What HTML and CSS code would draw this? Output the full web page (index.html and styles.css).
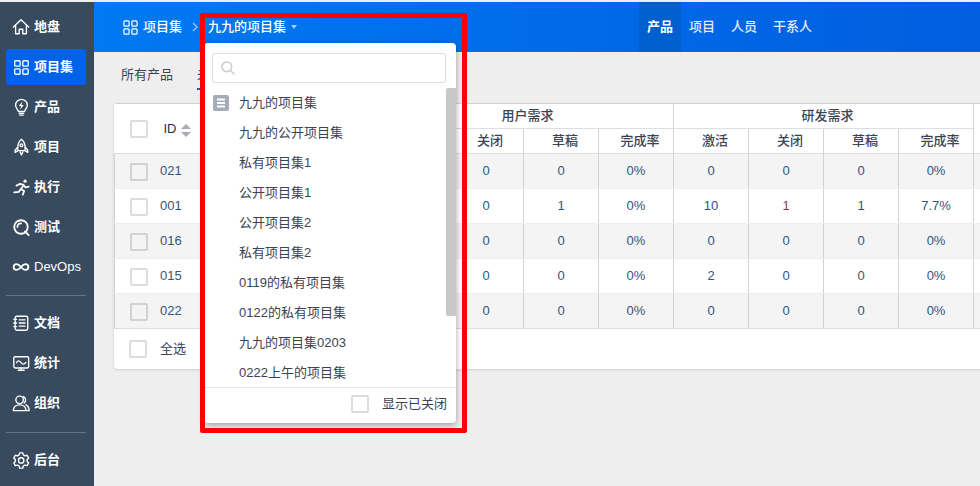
FILE: index.html
```html
<!DOCTYPE html>
<html lang="zh-CN">
<head>
<meta charset="utf-8">
<title>项目集</title>
<link rel="stylesheet" href="styles.css">
</head>
<body>
<div class="app">
  <aside class="sidebar">
    <nav class="nav-group">
      <a class="nav-item"><svg class="nav-icon" viewBox="0 0 20 20"><path d="M1.500 10 10 2l8.500 8M4 8v9.500h4V12.500h4v5h4V8"/></svg><span>地盘</span></a>
      <a class="nav-item active"><svg class="nav-icon" viewBox="0 0 20 20"><rect x="3" y="3" width="6" height="6" rx="1"/><rect x="12" y="3" width="6" height="6" rx="1"/><rect x="3" y="12" width="6" height="6" rx="1"/><rect x="12" y="12" width="6" height="6" rx="1"/></svg><span>项目集</span></a>
      <a class="nav-item"><svg class="nav-icon" viewBox="0 0 20 20"><path d="M7 15c0-2-3-3.500-3-7a6.500 6.500 0 0 1 13 0c0 3.500-3 5-3 7zM8 17h5M8.500 19h4"/><path class="solid" d="M11.500 4 7.500 9h2.500l-1 4 4-5.200h-2.500z"/></svg><span>产品</span></a>
      <a class="nav-item"><svg class="nav-icon" viewBox="0 0 20 20"><path d="M10.500 1.500C7.500 4 6.500 7 6.500 10.500V14h8v-3.500c0-3.500-1-6.500-4-9zM6.500 10l-3 3.500V16l3-2M14.500 10l3 3.500V16l-3-2M9 15.500 10.500 19l1.500-3.500"/><circle cx="10.500" cy="8" r="1.500"/></svg><span>项目</span></a>
      <a class="nav-item"><svg class="nav-icon" viewBox="0 0 20 20"><circle class="solid" cx="14.500" cy="3.500" r="1.800"/><path class="thick" d="M5 8.500 9 6.500l4 1-3 5 3.500 2-1.500 4M9.500 12.500 7.500 15.500 2.500 16M13 8l2 2.500 3.500-.8"/></svg><span>执行</span></a>
      <a class="nav-item"><svg class="nav-icon" viewBox="0 0 20 20"><circle class="thick" cx="10" cy="10" r="7.500"/><path class="thick" d="m14.500 15 4 4M6 10a4 4 0 0 1 4-4"/></svg><span>测试</span></a>
      <a class="nav-item"><svg class="nav-icon" viewBox="0 0 20 20"><path class="thick" d="M10 10C8 7.500 6.500 6.800 5 6.800a3.200 3.200 0 0 0 0 6.400c1.500 0 3-.7 5-3.200s3.500-3.200 5-3.200a3.200 3.200 0 0 1 0 6.400c-1.500 0-3-.7-5-3.200z"/></svg><span class="latin">DevOps</span></a>
    </nav>
    <hr class="nav-divider">
    <nav class="nav-group">
      <a class="nav-item"><svg class="nav-icon" viewBox="0 0 20 20"><rect x="3.500" y="2.500" width="14" height="15.500" rx="2"/><path d="M8 6.500h6.500M8 10h6.500M8 13.500h6.500M2 6h3M2 10h3M2 14h3"/></svg><span>文档</span></a>
      <a class="nav-item"><svg class="nav-icon" viewBox="0 0 20 20"><rect x="2" y="3" width="16.500" height="12.500" rx="1.500"/><path d="M5 9.500c1.500-2.500 3-2.500 5 0s3.500 2 5.500 0M7 18h6.500M10 15.500V18"/></svg><span>统计</span></a>
      <a class="nav-item"><svg class="nav-icon" viewBox="0 0 20 20"><circle cx="8.500" cy="6.500" r="4.200"/><path d="M1.500 18.500c0-4 3-6.500 7-6.500s7 2.500 7 6.500zM12.500 2.800a4.200 4.200 0 0 1 1 7.200M15.500 12c2 1 3.500 3 3.500 6.500h-3"/></svg><span>组织</span></a>
    </nav>
    <hr class="nav-divider nav-divider-low">
    <nav class="nav-group">
      <a class="nav-item"><svg class="nav-icon" viewBox="0 0 20 20"><path d="M8.500 2h3.500l.6 2.300 1.900 1.100 2.300-.7 1.700 3-1.700 1.700v2.200l1.700 1.700-1.700 3-2.300-.7-1.900 1.100-.6 2.300H8.500l-.6-2.300-1.900-1.100-2.300.7-1.700-3 1.700-1.700V9.400L2 7.700l1.700-3 2.300.7 1.900-1.100z"/><circle cx="10.200" cy="10.500" r="3"/></svg><span>后台</span></a>
    </nav>
  </aside>

  <main class="main">
    <header class="topbar">
      <div class="crumb">
        <svg class="crumb-icon" viewBox="0 0 16 16"><rect x="1" y="1" width="5.500" height="5.500" rx="1"/><rect x="9.500" y="1" width="5.500" height="5.500" rx="1"/><rect x="1" y="9.500" width="5.500" height="5.500" rx="1"/><rect x="9.500" y="9.500" width="5.500" height="5.500" rx="1"/></svg>
        <span>项目集</span>
      </div>
      <svg class="chevron" viewBox="0 0 6 10"><path d="m1 1 4 4-4 4"/></svg>
      <div class="current">九九的项目集<i class="caret"></i></div>
      <nav class="tabs">
        <a class="tab active">产品</a>
        <a class="tab">项目</a>
        <a class="tab">人员</a>
        <a class="tab">干系人</a>
      </nav>
    </header>

    <div class="subnav">
      <a class="sublink">所有产品</a>
      <a class="sublink active">未关闭</a>
    </div>

    <section class="card">
      <table class="grid">
        <colgroup>
          <col class="col-main"><col class="col-num"><col class="col-num"><col class="col-num"><col class="col-num"><col class="col-num"><col class="col-num"><col class="col-num"><col class="col-num"><col class="col-last">
        </colgroup>
        <thead>
          <tr>
            <th rowspan="2" class="cell-main"><span class="id-cell"><i class="check"></i><b class="id-title">ID</b><i class="sort"></i></span></th>
            <th colspan="4">用户需求</th>
            <th colspan="4">研发需求</th>
            <th rowspan="2"></th>
          </tr>
          <tr>
            <th>激活</th><th>关闭</th><th>草稿</th><th>完成率</th>
            <th>激活</th><th>关闭</th><th>草稿</th><th>完成率</th>
          </tr>
        </thead>
        <tbody>
          <tr><td class="cell-main"><span class="id-cell"><i class="check"></i><a class="id-link">021</a></span></td><td>0</td><td>0</td><td>0</td><td>0%</td><td>0</td><td>0</td><td>0</td><td>0%</td><td></td></tr>
          <tr><td class="cell-main"><span class="id-cell"><i class="check"></i><a class="id-link">001</a></span></td><td>0</td><td>0</td><td>1</td><td>0%</td><td>10</td><td class="warn">1</td><td>1</td><td>7.7%</td><td></td></tr>
          <tr><td class="cell-main"><span class="id-cell"><i class="check"></i><a class="id-link">016</a></span></td><td>0</td><td>0</td><td>0</td><td>0%</td><td>0</td><td>0</td><td>0</td><td>0%</td><td></td></tr>
          <tr><td class="cell-main"><span class="id-cell"><i class="check"></i><a class="id-link">015</a></span></td><td>0</td><td>0</td><td>0</td><td>0%</td><td>2</td><td>0</td><td>0</td><td>0%</td><td></td></tr>
          <tr><td class="cell-main"><span class="id-cell"><i class="check"></i><a class="id-link">022</a></span></td><td>0</td><td>0</td><td>0</td><td>0%</td><td>0</td><td>0</td><td>0</td><td>0%</td><td></td></tr>
        </tbody>
      </table>
      <div class="card-footer"><i class="check"></i><span>全选</span></div>
    </section>
  </main>
</div>

<div class="dropdown">
  <div class="search">
    <svg class="search-icon" viewBox="0 0 14 14"><circle cx="5.800" cy="5.800" r="4.800"/><path d="m9.300 9.300 4 4"/></svg>
  </div>
  <div class="list-wrap">
    <ul class="list">
      <li class="list-item"><svg class="item-icon" viewBox="0 0 16 16"><rect class="item-bg" width="16" height="16" rx="2"/><path class="item-lines" d="M4 4.500h8M4 8h8M4 11.500h8"/></svg>九九的项目集</li>
      <li class="list-item">九九的公开项目集</li>
      <li class="list-item">私有项目集1</li>
      <li class="list-item">公开项目集1</li>
      <li class="list-item">公开项目集2</li>
      <li class="list-item">私有项目集2</li>
      <li class="list-item">0119的私有项目集</li>
      <li class="list-item">0122的私有项目集</li>
      <li class="list-item">九九的项目集0203</li>
      <li class="list-item">0222上午的项目集</li>
    </ul>
    <div class="scroll-track"><div class="scroll-thumb"></div></div>
  </div>
  <div class="dropdown-footer"><i class="check"></i><span>显示已关闭</span></div>
</div>
<div class="annotation"></div>
</body>
</html>
```

FILE: styles.css
```css
* { box-sizing: border-box; }
html, body { height: 100%; }
body {
  margin: 0;
  overflow: hidden;
  background: #eee;
  color: #3c4353;
  font: 13px/20px "Liberation Sans", "Noto Sans CJK SC", sans-serif;
}
a { color: inherit; text-decoration: none; }
i { display: block; }

.app { display: flex; height: 486px; padding-top: 2px; }

/* sidebar */
.sidebar {
  flex: 0 0 94px;
  background: #384a5e;
  padding: 7px 8px 0 6px;
  color: #fff;
}
.nav-group { display: flex; flex-direction: column; gap: 4px; }
.nav-item {
  display: flex;
  align-items: center;
  gap: 4px;
  height: 36px;
  padding-left: 6px;
  border-radius: 2px;
  font-weight: 700;
}
.nav-item.active { background: #0062e6; }
.nav-item .latin { font-weight: 400; }
.nav-icon { width: 18px; height: 18px; fill: none; stroke: #fff; stroke-width: 1.5; stroke-linejoin: round; stroke-linecap: round; flex: none; }
.nav-icon .solid { fill: #fff; stroke: none; }
.nav-icon .thick { stroke-width: 2; }
.nav-divider { margin: 10px 0 9px; height: 1px; border: 0; background: #66747f; }
.nav-divider-low { margin-top: 11px; }

/* main */
.main { flex: 1; min-width: 0; overflow: hidden; }
.topbar {
  display: flex;
  align-items: center;
  height: 50px;
  padding: 0 160px 0 29px;
  background: linear-gradient(90deg, #0079f2, #005edf);
  color: #fff;
}
.crumb { display: flex; align-items: center; gap: 5px; font-weight: 500; }
.crumb-icon { width: 15px; height: 15px; fill: none; stroke: #fff; stroke-width: 1.300; }
.chevron { width: 6px; height: 10px; margin: 0 10px 0 10px; fill: none; stroke: rgba(255,255,255,.6); stroke-width: 1.300; }
.current { display: flex; align-items: center; gap: 5px; font-weight: 500; }
.caret { width: 0; height: 0; border: 3.500px solid transparent; border-top: 4px solid #a9d0fa; border-bottom: 0; }
.tabs { display: flex; margin-left: auto; height: 100%; }
.tab { display: flex; align-items: center; padding: 0 8px; font-weight: 500; color: #e2edfb; }
.tab.active { background: #0060d0; color: #fff; font-weight: 700; }

.subnav { display: flex; gap: 24px; height: 51px; padding: 12px 0 0 27px; }
.sublink { height: 26px; line-height: 22px; padding-bottom: 2px; border-bottom: 2px solid transparent; }
.sublink.active { border-bottom-color: #0062e6; color: #0062e6; font-weight: 500; }

/* card with table */
.card {
  width: 960px;
  margin-left: 20px;
  background: #fff;
  border-radius: 0 0 4px 4px;
  box-shadow: 0 1px 3px rgba(0,0,0,.13);
}
.grid { width: 100%; table-layout: fixed; border-collapse: collapse; }
.col-main { width: 259px; }
.col-num { width: 75px; }
.col-last { width: 101px; }
.grid th {
  height: 25px;
  padding: 0 0 0 8px;
  border: 1px solid #cfd2dd;
  border-bottom-color: #dcdee5;
  font-weight: 500;
  text-align: center;
  background: #fff;
}
.grid td {
  height: 35px;
  padding: 0;
  text-align: center;
  color: #31567a;
  border-left: 1px solid #cfd2dd;
  border-right: 1px solid #cfd2dd;
  border-bottom: 1px solid #eee;
}
.grid tbody tr:nth-child(odd) td { background: #f4f4f5; }
.grid tbody tr:last-child td { border-bottom-color: #dcdee5; }
.grid .cell-main { text-align: left; padding: 0; }
.grid thead .cell-main { border-left: 0; border-top-color: #cfd2dd; }
.id-cell { display: flex; align-items: center; padding-left: 15px; }
.id-title { margin-left: 16px; font-weight: 500; color: #26324a; }
.id-link { margin-left: 12px; color: #31567a; }
.warn { color: #8f4141 !important; }
.sort { position: relative; width: 10px; height: 13px; margin-left: 4px; margin-top: 3px; }
.sort::before, .sort::after { content: ""; position: absolute; left: 0; border: 5px solid transparent; }
.sort::before { top: 0; border-bottom: 5px solid #a7abb5; border-top: 0; }
.sort::after { bottom: 0; border-top: 5px solid #a7abb5; border-bottom: 0; }

.check { flex: none; width: 18px; height: 18px; border: 2px solid #ddd; border-radius: 2px; background: #fff; }
.grid tbody .check { margin-top: 2px; }
.grid tbody tr:nth-child(odd) .check { background: #f4f4f5; border-color: #d2d2d2; }
.card-footer { display: flex; align-items: center; gap: 13px; height: 40px; padding-left: 15px; }

/* dropdown */
.dropdown {
  position: absolute;
  left: 205px;
  top: 43px;
  width: 251px;
  height: 380px;
  display: flex;
  flex-direction: column;
  background: #fff;
  border-radius: 2px 4px 4px 2px;
  box-shadow: 0 2px 6px rgba(0,0,0,.35);
}
.search {
  display: flex;
  align-items: center;
  flex: none;
  width: 234px;
  height: 30px;
  margin: 10px 0 4px 7px;
  padding-left: 8px;
  border: 1px solid #ddd;
  border-radius: 2px;
}
.search-icon { width: 14px; height: 14px; fill: none; stroke: #ccc; stroke-width: 1.600; }
.list-wrap { display: flex; flex: none; height: 300px; overflow: hidden; }
.list { flex: 1; margin: 0; padding: 0; list-style: none; }
.list-item { position: relative; height: 30px; line-height: 30px; padding: 1px 0 0 34px; color: #3c4353; white-space: nowrap; }
.item-icon { position: absolute; left: 8px; top: 8px; width: 16px; height: 16px; }
.item-bg { fill: #a6abb8; }
.item-lines { fill: none; stroke: #fff; stroke-width: 2; }
.scroll-track { flex: 0 0 10px; padding-top: 1px; }
.scroll-thumb { height: 228px; background: #c8c8c8; border-radius: 2px 0 0 2px; }
.dropdown-footer {
  display: flex;
  align-items: center;
  justify-content: flex-end;
  gap: 13px;
  flex: 1;
  padding: 0 9px 4px 0;
  border-top: 1px solid #e8e8e8;
  color: #3c4353;
}

/* red annotation frame on the screenshot */
.annotation {
  position: absolute;
  left: 200px;
  top: 13px;
  width: 267px;
  height: 420px;
  border: 5px solid #f00;
  border-radius: 2px;
  pointer-events: none;
}
```
